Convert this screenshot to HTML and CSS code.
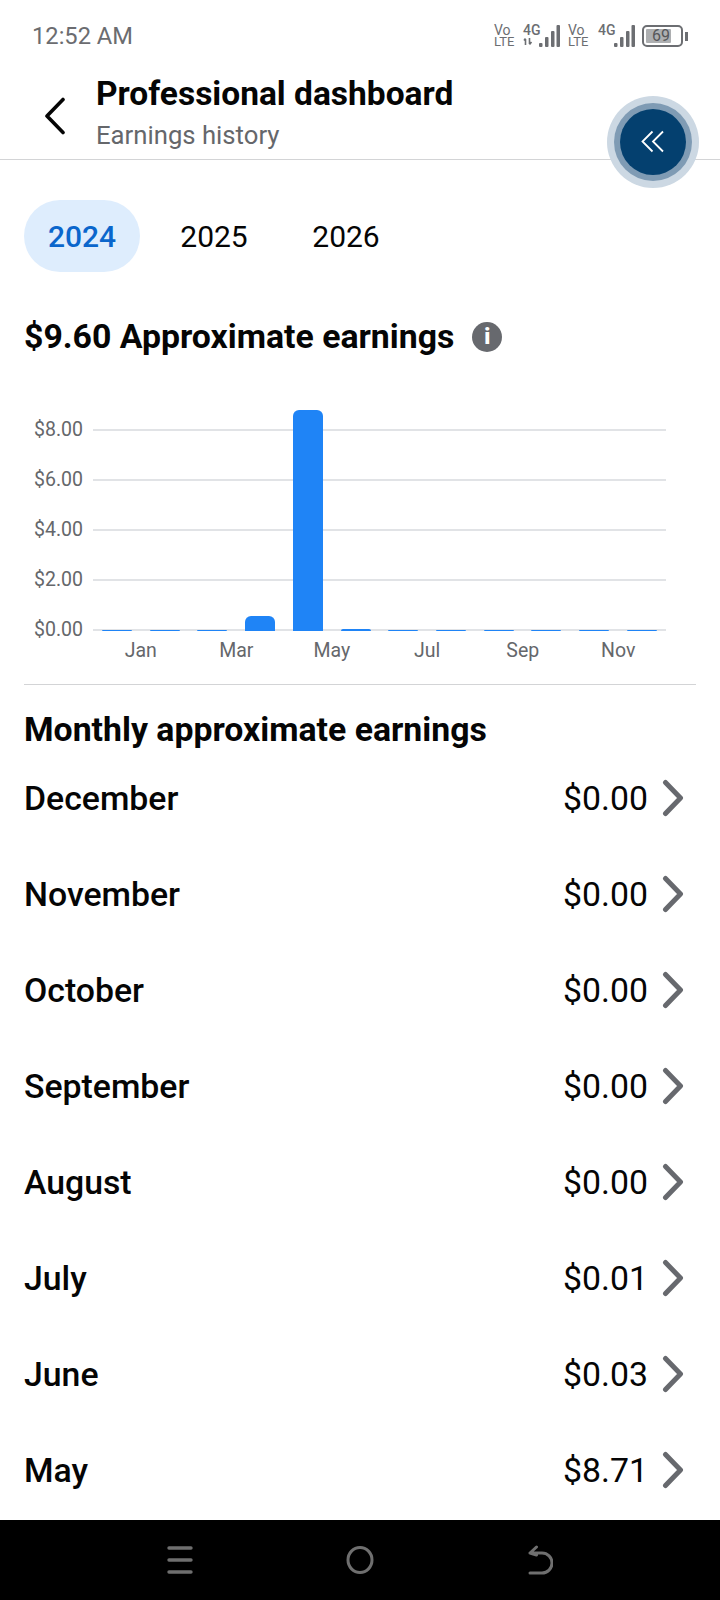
FILE: index.html
```html
<!DOCTYPE html>
<html lang="en">
<head>
    <meta charset="UTF-8">
    <title>Earnings history</title>
    <link rel="stylesheet" href="styles.css">
</head>
<body>
    <div class="screen">
        <div class="status-bar">
            <span class="clock">12:52 AM</span>
            <div class="status-icons">
                <div class="volte"><span class="vo">Vo</span><br>LTE</div>
                <div class="net net-first">
                    4G
                    <svg class="arrows" width="10" height="7" viewBox="0 0 10 7"><path d="M2.500 7V1M1 2.500 2.500 .5M6.500 0v6M6.500 6.500 8.500 4" fill="none" stroke="#6c6e72" stroke-width="1.600"/></svg>
                </div>
                <svg class="signal" width="21" height="22" viewBox="0 0 21 22"><rect x="0" y="18" width="3.500" height="4" rx="1"/><rect x="6" y="12" width="3.500" height="10" rx="1"/><rect x="12" y="6" width="3.500" height="16" rx="1"/><rect x="17.500" y="0" width="3.500" height="22" rx="1"/></svg>
                <div class="volte volte-two"><span class="vo">Vo</span><br>LTE</div>
                <div class="net net-second">4G</div>
                <svg class="signal" width="21" height="22" viewBox="0 0 21 22"><rect x="0" y="18" width="3.500" height="4" rx="1"/><rect x="6" y="12" width="3.500" height="10" rx="1"/><rect x="12" y="6" width="3.500" height="16" rx="1"/><rect x="17.500" y="0" width="3.500" height="22" rx="1"/></svg>
                <div class="battery"><div class="battery-fill"></div><span class="battery-text">69</span></div>
                <div class="battery-nub"></div>
            </div>
        </div>

        <header class="top-bar">
            <button class="back-btn">
                <svg width="24" height="38" viewBox="0 0 24 38"><path d="M20 2.500 4 19l16 16.500" fill="none" stroke="#050505" stroke-width="3.600" stroke-linecap="round" stroke-linejoin="round"/></svg>
            </button>
            <div class="top-titles">
                <div class="page-title">Professional dashboard</div>
                <div class="page-sub">Earnings history</div>
            </div>
        </header>

        <div class="float-btn">
            <svg width="24" height="24" viewBox="0 0 24 24"><path d="M11.500 1.500 1.500 11.500l10 10M22 1.500l-10 10 10 10" fill="none" stroke="#fff" stroke-width="1.800"/></svg>
        </div>

        <div class="year-tabs">
            <div class="year-tab active">2024</div>
            <div class="year-tab">2025</div>
            <div class="year-tab">2026</div>
        </div>

        <div class="total">
            <h2>$9.60 Approximate earnings</h2>
            <span class="info-icon">i</span>
        </div>

        <div class="chart">
            <div class="y-labels">
                <span>$8.00</span>
                <span>$6.00</span>
                <span>$4.00</span>
                <span>$2.00</span>
                <span>$0.00</span>
            </div>
            <div class="plot">
                <div class="grid-line"></div>
                <div class="grid-line"></div>
                <div class="grid-line"></div>
                <div class="grid-line"></div>
                <div class="grid-line"></div>
                <div class="bars">
                    <div class="bar" style="height:1px"></div>
                    <div class="bar" style="height:1px"></div>
                    <div class="bar" style="height:1px"></div>
                    <div class="bar" style="height:15px"></div>
                    <div class="bar" style="height:221px"></div>
                    <div class="bar" style="height:2px"></div>
                    <div class="bar" style="height:1px"></div>
                    <div class="bar" style="height:1px"></div>
                    <div class="bar" style="height:1px"></div>
                    <div class="bar" style="height:1px"></div>
                    <div class="bar" style="height:1px"></div>
                    <div class="bar" style="height:1px"></div>
                </div>
            </div>
            <div class="x-labels">
                <span>Jan</span>
                <span>Mar</span>
                <span>May</span>
                <span>Jul</span>
                <span>Sep</span>
                <span>Nov</span>
            </div>
        </div>

        <div class="monthly">
            <h3>Monthly approximate earnings</h3>
            <div class="month-row"><span class="month">December</span><span class="amount">$0.00</span><svg class="chevron" width="22" height="38" viewBox="0 0 22 38"><path d="M3.500 3.500 18.500 19 3.500 34.500" fill="none" stroke="#67696e" stroke-width="5" stroke-linecap="round" stroke-linejoin="round"/></svg></div>
            <div class="month-row"><span class="month">November</span><span class="amount">$0.00</span><svg class="chevron" width="22" height="38" viewBox="0 0 22 38"><path d="M3.500 3.500 18.500 19 3.500 34.500" fill="none" stroke="#67696e" stroke-width="5" stroke-linecap="round" stroke-linejoin="round"/></svg></div>
            <div class="month-row"><span class="month">October</span><span class="amount">$0.00</span><svg class="chevron" width="22" height="38" viewBox="0 0 22 38"><path d="M3.500 3.500 18.500 19 3.500 34.500" fill="none" stroke="#67696e" stroke-width="5" stroke-linecap="round" stroke-linejoin="round"/></svg></div>
            <div class="month-row"><span class="month">September</span><span class="amount">$0.00</span><svg class="chevron" width="22" height="38" viewBox="0 0 22 38"><path d="M3.500 3.500 18.500 19 3.500 34.500" fill="none" stroke="#67696e" stroke-width="5" stroke-linecap="round" stroke-linejoin="round"/></svg></div>
            <div class="month-row"><span class="month">August</span><span class="amount">$0.00</span><svg class="chevron" width="22" height="38" viewBox="0 0 22 38"><path d="M3.500 3.500 18.500 19 3.500 34.500" fill="none" stroke="#67696e" stroke-width="5" stroke-linecap="round" stroke-linejoin="round"/></svg></div>
            <div class="month-row"><span class="month">July</span><span class="amount">$0.01</span><svg class="chevron" width="22" height="38" viewBox="0 0 22 38"><path d="M3.500 3.500 18.500 19 3.500 34.500" fill="none" stroke="#67696e" stroke-width="5" stroke-linecap="round" stroke-linejoin="round"/></svg></div>
            <div class="month-row"><span class="month">June</span><span class="amount">$0.03</span><svg class="chevron" width="22" height="38" viewBox="0 0 22 38"><path d="M3.500 3.500 18.500 19 3.500 34.500" fill="none" stroke="#67696e" stroke-width="5" stroke-linecap="round" stroke-linejoin="round"/></svg></div>
            <div class="month-row"><span class="month">May</span><span class="amount">$8.71</span><svg class="chevron" width="22" height="38" viewBox="0 0 22 38"><path d="M3.500 3.500 18.500 19 3.500 34.500" fill="none" stroke="#67696e" stroke-width="5" stroke-linecap="round" stroke-linejoin="round"/></svg></div>
        </div>

        <nav class="nav-bar">
            <svg width="26" height="28" viewBox="0 0 26 28"><path d="M2 2h22M2 14h22M2 26h22" fill="none" stroke="#6f6f6f" stroke-width="3.400" stroke-linecap="round"/></svg>
            <svg width="28" height="28" viewBox="0 0 28 28"><ellipse cx="14" cy="14" rx="12" ry="12.500" fill="none" stroke="#6f6f6f" stroke-width="3"/></svg>
            <svg width="26" height="30" viewBox="0 0 26 30"><path d="M3 28h12a10 10 0 0 0 0-20H3M9.500 2 3 8l6.500 2" fill="none" stroke="#6f6f6f" stroke-width="3" stroke-linecap="round" stroke-linejoin="round"/></svg>
        </nav>
    </div>
</body>
</html>
```

FILE: styles.css
```css
* {
    box-sizing: border-box;
}
body {
    margin: 0;
    background: #fff;
    font-family: Roboto, "Liberation Sans", sans-serif;
    color: #050505;
}
.screen {
    position: relative;
    width: 720px;
    height: 1600px;
    overflow: hidden;
    display: flex;
    flex-direction: column;
}

/* status bar */
.status-bar {
    height: 60px;
    padding: 14px 32px 0 32px;
    display: flex;
    justify-content: space-between;
    align-items: flex-start;
}
.clock {
    font-size: 23.700px;
    line-height: 44px;
    color: #6b6c70;
}
.status-icons {
    display: flex;
    align-items: flex-start;
    padding-top: 11px;
    color: #6c6e72;
}
.volte {
    width: 20px;
    font-size: 13px;
    line-height: 10.500px;
}
.vo {
    font-size: 14px;
}
.volte-two {
    margin-left: 8px;
}
.net {
    display: flex;
    flex-direction: column;
    width: 16px;
    margin-left: 9px;
    font-size: 14px;
    line-height: 11px;
    font-weight: 500;
}
.net-second {
    margin-left: 10px;
}
.arrows {
    margin-top: 2px;
}
.signal {
    fill: #6c6e72;
}
.battery {
    position: relative;
    width: 41px;
    height: 22px;
    margin-left: 7px;
    border: 2px solid #6c6e72;
    border-radius: 5px;
    padding: 2px;
}
.battery-fill {
    width: 25px;
    height: 100%;
    background: #adafb1;
    border-radius: 1px;
}
.battery-text {
    position: absolute;
    left: 8px;
    top: 0;
    font-size: 16px;
    line-height: 18px;
    color: #55575a;
}
.battery-nub {
    width: 3px;
    height: 9px;
    margin: 7px 0 0 2px;
    background: #6c6e72;
}

/* header */
.top-bar {
    height: 100px;
    display: flex;
    align-items: flex-start;
    border-bottom: 1.500px solid #d3d4d6;
}
.back-btn {
    width: 96px;
    padding: 37px 0 0 43px;
    border: none;
    background: none;
    text-align: left;
}
.top-titles {
    padding-top: 14px;
}
.page-title {
    font-size: 33.500px;
    line-height: 40px;
    font-weight: 700;
}
.page-sub {
    font-size: 25.700px;
    line-height: 30px;
    margin-top: 6px;
    color: #65676b;
}
.float-btn {
    position: absolute;
    left: 620px;
    top: 109px;
    width: 66px;
    height: 66px;
    border-radius: 50%;
    background: #04406f;
    box-shadow: 0 0 0 6px #7f9bb4, 0 0 0 13px #ccd8e3;
    display: flex;
    align-items: center;
    justify-content: center;
}

/* years */
.year-tabs {
    display: flex;
    margin: 40px 0 0 24px;
}
.year-tab {
    width: 116px;
    height: 72px;
    margin-right: 16px;
    border-radius: 36px;
    font-size: 30px;
    line-height: 74px;
    text-align: center;
}
.year-tab.active {
    background: #deedfd;
    color: #0a66cc;
    font-weight: 500;
}

/* total */
.total {
    display: flex;
    align-items: center;
    margin: 43px 0 0 24px;
    height: 44px;
}
.total h2 {
    margin: 0;
    font-size: 33.800px;
    line-height: 44px;
    font-weight: 700;
}
.info-icon {
    width: 30px;
    height: 30px;
    margin-left: 18px;
    border-radius: 50%;
    background: #67696e;
    color: #fff;
    font-size: 22px;
    line-height: 30px;
    font-weight: 900;
    text-align: center;
}

/* chart */
.chart {
    position: relative;
    display: grid;
    grid-template-columns: 69px 573px;
    grid-template-rows: 220px 24px;
    margin: 0 24px;
    height: 326px;
    padding-top: 61px;
    border-bottom: 1.500px solid #d3d4d6;
}
.y-labels {
    display: flex;
    flex-direction: column;
    justify-content: space-between;
    height: 220px;
    padding-left: 10px;
    font-size: 19.500px;
    color: #65676b;
}
.y-labels span {
    line-height: 20px;
}
.plot {
    position: relative;
    display: flex;
    flex-direction: column;
    justify-content: space-between;
    height: 202px;
    margin-top: 9px;
}
.grid-line {
    height: 2px;
    background: #e1e3e6;
}
.bars {
    position: absolute;
    left: 9px;
    right: 9px;
    bottom: 0;
    display: flex;
    justify-content: space-between;
    align-items: flex-end;
}
.bar {
    width: 30px;
    background: #1f84f6;
    border-radius: 6px 6px 0 0;
}
.x-labels {
    grid-column: 2;
    display: flex;
    margin-top: -1px;
    font-size: 19.500px;
    color: #65676b;
}
.x-labels span {
    width: 95.500px;
    text-align: center;
    line-height: 24px;
}

/* monthly */
.monthly {
    margin: 0 24px;
}
.monthly h3 {
    margin: 25px 0 0;
    font-size: 33.800px;
    line-height: 40px;
    font-weight: 700;
}
.month-row {
    display: flex;
    align-items: center;
    height: 96px;
}
.month {
    flex: 1;
    font-size: 33.800px;
    font-weight: 500;
}
.amount {
    font-size: 33.800px;
}
.chevron {
    margin: 0 12px 0 14px;
}

/* nav */
.nav-bar {
    position: absolute;
    left: 0;
    right: 0;
    bottom: 0;
    height: 80px;
    background: #000;
    display: flex;
    justify-content: center;
    align-items: center;
    gap: 153px;
}
```
